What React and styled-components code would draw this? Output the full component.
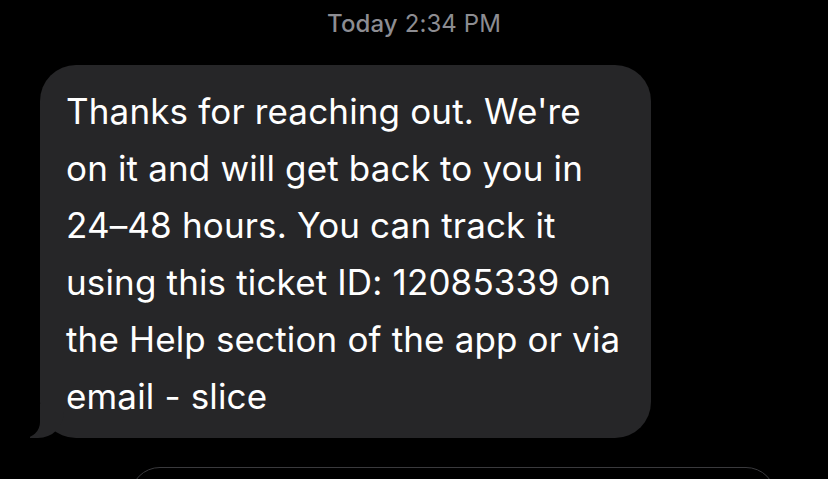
import React from 'react';
import styled, { createGlobalStyle } from 'styled-components';

const GlobalStyle = createGlobalStyle`
  html, body {
    margin: 0;
    padding: 0;
    background: #000;
    overflow: hidden;
  }
  body {
    font-family: Inter, "Liberation Sans", sans-serif;
    -webkit-font-smoothing: antialiased;
  }
`;

// whole thread, clipped at the window
const Thread = styled.div`
  width: 828px;
  height: 479px;
  overflow: hidden;
  display: flex;
  flex-direction: column;
  background: #000;
  & > * {
    flex-shrink: 0;
  }
`;

// time stamp
const Stamp = styled.div`
  height: 46px;
  display: flex;
  justify-content: center;
  align-items: center;
  color: #8d8d92;
  font-size: 24px;
  letter-spacing: 0.1px;
`;

const StampDay = styled.span`
  font-weight: 500;
  margin-right: 7px;
`;

// message row
const Row = styled.div`
  display: flex;
  padding-left: 40px;
  margin-top: 19px;
`;

const Bubble = styled.div`
  position: relative;
  width: 611px;
  height: 373px;
  box-sizing: border-box;
  padding: 18px 0 0 26px;
  background: #262628;
  border-radius: 36px;
  color: #fff;
  font-size: 35px;
  line-height: 57px;
  letter-spacing: 0.15px;

  &::before {
    content: "";
    position: absolute;
    left: -10px;
    bottom: 0;
    width: 34px;
    height: 34px;
    background: #262628;
    border-bottom-right-radius: 26px;
  }

  &::after {
    content: "";
    position: absolute;
    left: -20px;
    bottom: 0;
    width: 20px;
    height: 36px;
    background: #000;
    border-bottom-right-radius: 16px;
  }
`;

const Line = styled.div`
  position: relative;
  z-index: 1;
  white-space: nowrap;
`;

// compose field at the bottom
const Compose = styled.div`
  margin-top: 29px;
  margin-left: 130px;
  width: 646px;
  height: 60px;
  box-sizing: border-box;
  border: 1.5px solid #3a3a3d;
  border-radius: 30px;
`;

const lines = [
  "Thanks for reaching out. We're",
  'on it and will get back to you in',
  '24\u201348 hours. You can track it',
  'using this ticket ID: 12085339 on',
  'the Help section of the app or via',
  'email - slice',
];

const App = () => {
  return (
    <Thread>
      <GlobalStyle />
      <Stamp>
        <StampDay>Today</StampDay>2:34 PM
      </Stamp>
      <Row>
        <Bubble>
          {lines.map((l) => (
            <Line key={l}>{l}</Line>
          ))}
        </Bubble>
      </Row>
      <Compose />
    </Thread>
  );
};

export default App;
